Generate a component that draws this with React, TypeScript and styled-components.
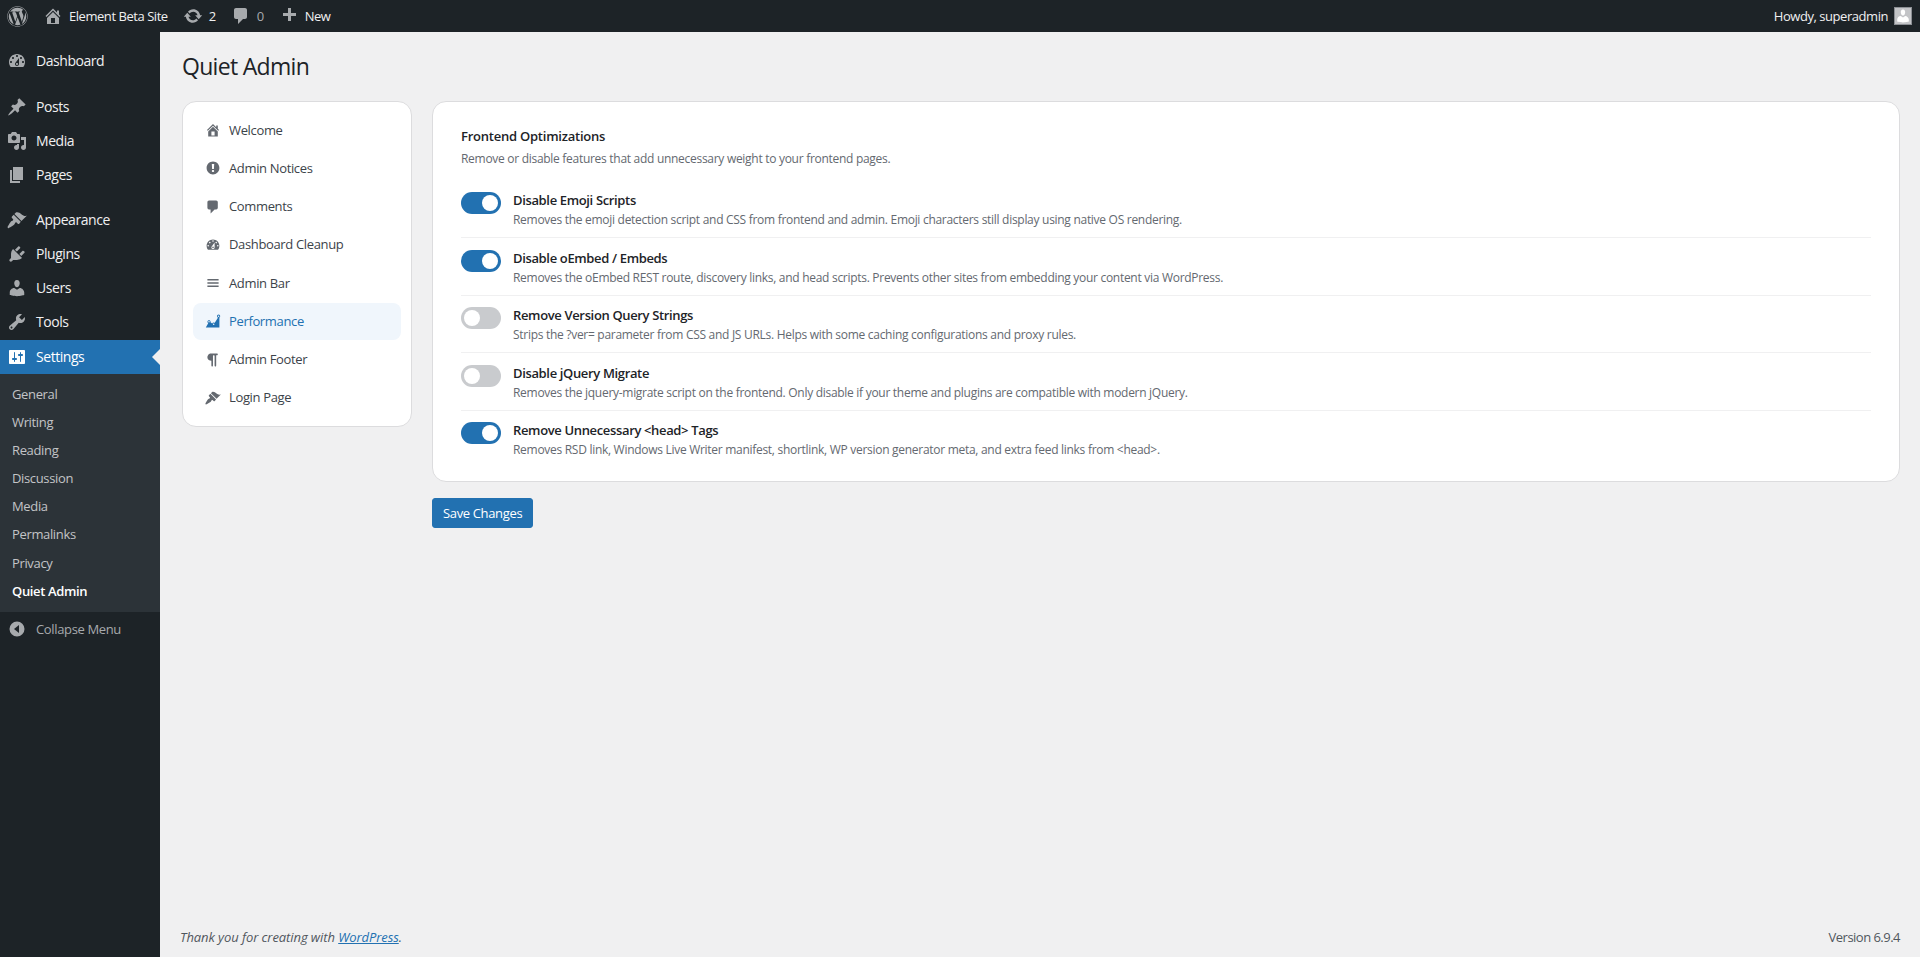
import styled, { createGlobalStyle } from "styled-components";
import { FaWordpress } from "react-icons/fa";

const GlobalStyle = createGlobalStyle`
  html, body {
    margin: 0;
    padding: 0;
    background: #f0f0f1;
  }
  body {
    font-family: "Open Sans", "Noto Sans", sans-serif;
    font-size: 13px;
    letter-spacing: -0.027em;
    color: #3c434a;
  }
`;

// dashicons drawn on a 20x20 grid
const paths: Record<string, string> = {
  home: "M16 8.5l1.53 1.53-1.06 1.06L10 4.62l-6.47 6.47-1.06-1.06L10 2.5l4 4v-2h2v4zm-6-2.46l6 5.99V18H4v-5.97zM12 17v-5H8v5h4z",
  update:
    "M10.2 3.28c3.53 0 6.43 2.61 6.92 6h2.08l-3.5 4-3.5-4h2.32c-.45-1.97-2.21-3.45-4.32-3.45-1.45 0-2.73.71-3.54 1.78L4.95 5.66C6.23 4.2 8.11 3.28 10.2 3.28zm-.4 13.44c-3.52 0-6.43-2.61-6.92-6H.8l3.5-4c1.17 1.33 2.33 2.67 3.5 4H5.48c.45 1.97 2.21 3.45 4.32 3.45 1.45 0 2.73-.71 3.54-1.78l1.71 1.95c-1.28 1.46-3.15 2.38-5.25 2.38z",
  comment: "M5 2h9c1.1 0 2 .9 2 2v7c0 1.1-.9 2-2 2h-2l-5 5v-5H5c-1.1 0-2-.9-2-2V4c0-1.1.9-2 2-2z",
  plus: "M17 7v3h-5v5H9v-5H4V7h5V2h3v5h5z",
  dashboard:
    "M3.76 16h12.48c1.1-1.37 1.76-3.11 1.76-5 0-4.42-3.58-8-8-8s-8 3.58-8 8c0 1.89.66 3.63 1.76 5zM10 4c.55 0 1 .45 1 1s-.45 1-1 1-1-.45-1-1 .45-1 1-1zM6 6c.55 0 1 .45 1 1s-.45 1-1 1-1-.45-1-1 .45-1 1-1zm8 0c.55 0 1 .45 1 1s-.45 1-1 1-1-.45-1-1 .45-1 1-1zm-5.37 5.55L12 7v6c0 1.1-.9 2-2 2s-2-.9-2-2c0-.57.24-1.08.63-1.45zM4 10c.55 0 1 .45 1 1s-.45 1-1 1-1-.45-1-1 .45-1 1-1zm12 0c.55 0 1 .45 1 1s-.45 1-1 1-1-.45-1-1 .45-1 1-1zm-5 3c0-.55-.45-1-1-1s-1 .45-1 1 .45 1 1 1 1-.45 1-1z",
  pin: "M10.44 3.02l1.82-1.82 6.36 6.35-1.83 1.82c-1.05-.68-2.48-.57-3.41.36l-.75.75c-.92.93-1.04 2.35-.35 3.41l-1.83 1.82-2.41-2.41-2.8 2.79c-.42.42-3.38 2.71-3.8 2.29s1.86-3.39 2.28-3.81l2.79-2.79L4.1 9.36l1.83-1.82c1.05.69 2.48.57 3.4-.36l.75-.75c.93-.92 1.05-2.35.36-3.41z",
  media:
    "M13 11V4c0-.55-.45-1-1-1h-1.67L9 1H5L3.67 3H2c-.55 0-1 .45-1 1v7c0 .55.45 1 1 1h10c.55 0 1-.45 1-1zM7 4.5c1.38 0 2.5 1.12 2.5 2.5S8.38 9.5 7 9.5 4.5 8.38 4.5 7 5.62 4.5 7 4.5zM14 6h5v10.5c0 1.38-1.12 2.5-2.5 2.5S14 17.88 14 16.5s1.12-2.5 2.5-2.5c.17 0 .34.02.5.05V9h-3V6zm-4 8.05V13h2v3.5c0 1.38-1.12 2.5-2.5 2.5S7 17.88 7 16.5 8.12 14 9.5 14c.17 0 .34.02.5.05z",
  page: "M6 15V2h10v13H6zm-1 1h8v2H3V5h2v11z",
  brush:
    "M14.48 11.06L7.41 3.99l1.5-1.5c.5-.56 2.3-.47 3.51.32 1.21.8 1.43 1.28 2.91 2.1 1.18.64 2.45 1.26 4.45.85zm-.71.71L6.7 4.7 4.93 6.47c-.39.39-.39 1.02 0 1.41l1.06 1.06c.39.39.39 1.03 0 1.42-.6.6-1.6.75-2.4 1.6-.7.75-2.9 4.7-2.9 4.7s-.3.8.1 1.2.9.3 1.2.1c0 0 4-2.2 4.75-2.9.85-.8 1-1.8 1.6-2.4.39-.39 1.03-.39 1.42 0l1.06 1.06c.39.39 1.02.39 1.41 0z",
  plugin:
    "M13.11 4.36L9.87 7.6 8 5.73l3.24-3.24c.35-.34 1.05-.2 1.56.32.52.51.66 1.21.31 1.55zm-8 1.77l.91-1.12 9.01 9.01-1.19.84c-.71.71-2.63 1.16-3.82 1.16H6.14L4.9 17.26c-.59.59-1.54.59-2.12 0-.59-.58-.59-1.53 0-2.12l1.24-1.24v-3.88c0-1.13.4-3.19 1.09-3.89zm7.26 3.97l3.24-3.24c.34-.35 1.04-.21 1.55.31.52.51.66 1.21.31 1.55l-3.24 3.25z",
  users:
    "M10 9.25c-2.27 0-2.73-3.44-2.73-3.44C7 4.02 7.82 2 9.97 2c2.16 0 2.98 2.02 2.71 3.81 0 0-.41 3.44-2.68 3.44zm0 2.57L12.72 10c2.39 0 4.52 2.33 4.52 4.53v2.49s-3.65 1.13-7.24 1.13c-3.65 0-7.24-1.13-7.24-1.13v-2.49c0-2.25 1.94-4.48 4.47-4.48z",
  tools:
    "M16.68 9.77c-1.34 1.34-3.3 1.67-4.95.99l-5.41 6.52c-.99.99-2.59.99-3.58 0s-.99-2.59 0-3.57l6.52-5.42c-.68-1.65-.35-3.61.99-4.95 1.28-1.28 3.12-1.62 4.72-1.06l-2.89 2.89 2.82 2.82 2.86-2.87c.53 1.58.18 3.39-1.08 4.65zM3.81 16.21c.4.39 1.04.39 1.43 0 .4-.4.4-1.04 0-1.43-.39-.4-1.03-.4-1.43 0-.39.39-.39 1.03 0 1.43z",
  settings:
    "M18 16V4c0-.55-.45-1-1-1H3c-.55 0-1 .45-1 1v12c0 .55.45 1 1 1h14c.55 0 1-.45 1-1zM8 11h1c.55 0 1 .45 1 1s-.45 1-1 1H8v1.5c0 .28-.22.5-.5.5s-.5-.22-.5-.5V13H6c-.55 0-1-.45-1-1s.45-1 1-1h1V5.5c0-.28.22-.5.5-.5s.5.22.5.5V11zm5-2h-1c-.55 0-1-.45-1-1s.45-1 1-1h1V5.5c0-.28.22-.5.5-.5s.5.22.5.5V7h1c.55 0 1 .45 1 1s-.45 1-1 1h-1v5.5c0 .28-.22.5-.5.5s-.5-.22-.5-.5V9z",
  collapse: "M10 2.5a7.5 7.5 0 1 0 0 15 7.5 7.5 0 0 0 0-15zM12 6v8l-5-4z",
  warning:
    "M10 2c4.42 0 8 3.58 8 8s-3.58 8-8 8-8-3.58-8-8 3.58-8 8-8zm1.13 9.38l.35-6.46H8.52l.35 6.46h2.26zm-.09 3.36c.24-.23.37-.55.37-.96 0-.42-.12-.74-.36-.97s-.59-.35-1.06-.35-.82.12-1.07.35-.37.55-.37.97c0 .41.13.73.38.96.26.23.61.34 1.06.34s.8-.11 1.05-.34z",
  menu: "M17 7V5H3v2h14zm0 4V9H3v2h14zm0 4v-2H3v2h14z",
  chart:
    "M18 18l.01-12.28c.59-.35.99-.99.99-1.72 0-1.1-.9-2-2-2s-2 .9-2 2c0 .8.47 1.48 1.14 1.8l-4.13 6.58c-.33-.24-.73-.38-1.16-.38-.84 0-1.55.51-1.85 1.24l-2.14-1.53c.09-.22.14-.46.14-.71 0-1.11-.89-2-2-2-1.1 0-2 .89-2 2 0 .73.4 1.36.98 1.71L1 18h17zM17 3c.55 0 1 .45 1 1s-.45 1-1 1-1-.45-1-1 .45-1 1-1zM5 10c.55 0 1 .45 1 1s-.45 1-1 1-1-.45-1-1 .45-1 1-1zm5.85 3c.55 0 1 .45 1 1s-.45 1-1 1-1-.45-1-1 .45-1 1-1z",
  paragraph:
    "M15 2H7.54c-.83 0-1.59.2-2.28.6-.7.41-1.25.96-1.65 1.65C3.2 4.94 3 5.7 3 6.52s.2 1.58.61 2.27c.4.69.95 1.24 1.65 1.64.69.41 1.45.61 2.28.61h.43V17c0 .27.1.51.29.71.2.19.44.29.71.29.28 0 .51-.1.71-.29.2-.2.3-.44.3-.71V5c0-.27.09-.51.29-.71.2-.19.44-.29.71-.29s.51.1.71.29c.19.2.29.44.29.71v12c0 .27.1.51.3.71.2.19.43.29.71.29.27 0 .51-.1.71-.29.19-.2.29-.44.29-.71V4H15c.27 0 .5-.1.7-.3.2-.19.3-.43.3-.7s-.1-.51-.3-.71C15.5 2.1 15.27 2 15 2z",
};

const IconSvg = styled.svg<{ $size: number; $color: string }>`
  width: ${(p) => p.$size}px;
  height: ${(p) => p.$size}px;
  flex: none;
  fill: ${(p) => p.$color};
`;

function Dashicon({ name, size = 20, color = "#a7aaad" }: { name: string; size?: number; color?: string }) {
  return (
    <IconSvg viewBox="0 0 20 20" $size={size} $color={color}>
      <path fillRule="evenodd" d={paths[name]} />
    </IconSvg>
  );
}

const Page = styled.div`
  display: flex;
  flex-direction: column;
  height: 957px;
  overflow: hidden;
`;

const TopBar = styled.header`
  display: flex;
  align-items: center;
  justify-content: space-between;
  flex: none;
  height: 32px;
  background: #1d2327;
  color: #f0f0f1;
  letter-spacing: -0.035em;
`;
const BarGroup = styled.div`
  display: flex;
  align-items: center;
  gap: 1px;
  height: 100%;
`;
const BarItem = styled.div<{ $muted?: boolean }>`
  display: flex;
  align-items: center;
  gap: 6px;
  height: 100%;
  padding: 0 7px;
  color: ${(p) => (p.$muted ? "#a7aaad" : "#f0f0f1")};
`;
const WpLogo = styled(FaWordpress)`
  display: block;
  width: 21px;
  height: 21px;
  color: #a7aaad;
`;
const Howdy = styled.div`
  display: flex;
  align-items: center;
  gap: 6px;
  padding-right: 8px;
`;
const Avatar = styled.div`
  display: flex;
  align-items: flex-end;
  justify-content: center;
  width: 16px;
  height: 16px;
  background: #c3c4c7;
  border: 1px solid #8c8f94;
  overflow: hidden;
`;

const Body = styled.div`
  display: flex;
  flex: 1;
  min-height: 0;
`;

const Sidebar = styled.aside`
  flex: none;
  width: 160px;
  padding-top: 12px;
  background: #1d2327;
`;
const MenuItem = styled.div<{ $current?: boolean }>`
  position: relative;
  display: flex;
  align-items: center;
  gap: 9px;
  height: 34px;
  padding-left: 7px;
  font-size: 14px;
  letter-spacing: -0.032em;
  line-height: 32px;
  color: ${(p) => (p.$current ? "#fff" : "#f0f0f1")};
  background: ${(p) => (p.$current ? "#2271b1" : "transparent")};
`;
const CurrentArrow = styled.span`
  position: absolute;
  right: 0;
  top: 9px;
  border: 8px solid transparent;
  border-right-color: #f0f0f1;
  border-left-width: 0;
`;
const MenuGap = styled.div<{ $h: number }>`
  height: ${(p) => p.$h}px;
`;
const SubMenu = styled.div`
  padding: 7px 0 6.2px;
  background: #2c3338;
`;
const SubItem = styled.div<{ $current?: boolean }>`
  height: 28.1px;
  padding-left: 12px;
  font-size: 13px;
  line-height: 27px;
  font-weight: ${(p) => (p.$current ? 600 : 400)};
  color: ${(p) => (p.$current ? "#fff" : "#c3c4c7")};
`;
const CollapseRow = styled.div`
  display: flex;
  align-items: center;
  gap: 9px;
  height: 34px;
  padding-left: 7px;
  line-height: 32px;
  color: #a7aaad;
`;

const Content = styled.main`
  display: flex;
  flex-direction: column;
  flex: 1;
  min-width: 0;
  padding: 0 20px 0 22px;
`;
const Title = styled.h1`
  margin: 0;
  padding: 20px 0;
  font-size: 23px;
  font-weight: 400;
  line-height: 29px;
  letter-spacing: -0.03em;
  color: #1d2327;
`;
const Columns = styled.div`
  display: flex;
  align-items: flex-start;
  gap: 20px;
`;
const Card = styled.div`
  background: #fff;
  border: 1px solid #dcdcde;
  border-radius: 14px;
`;
const NavCard = styled(Card)`
  display: flex;
  flex-direction: column;
  gap: 2px;
  flex: none;
  width: 230px;
  box-sizing: border-box;
  padding: 10px;
`;
const NavItem = styled.div<{ $active?: boolean }>`
  display: flex;
  align-items: center;
  gap: 8px;
  height: 36.25px;
  padding: 0 12px;
  border-radius: 8px;
  line-height: 35px;
  font-weight: ${(p) => (p.$active ? 500 : 400)};
  color: ${(p) => (p.$active ? "#2271b1" : "#3c434a")};
  background: ${(p) => (p.$active ? "#f0f6fc" : "transparent")};
`;
const Panel = styled.div`
  flex: 1;
  min-width: 0;
`;
const PanelCard = styled(Card)`
  padding: 24px 28px;
  box-sizing: border-box;
  height: 381px;
`;
const SectionTitle = styled.h2`
  margin: 0 0 4px;
  font-size: 13px;
  font-weight: 600;
  line-height: 20px;
  letter-spacing: -0.018em;
  color: #1d2327;
`;
const SectionDesc = styled.p`
  margin: 0 0 12.4px;
  font-size: 12px;
  line-height: 18px;
  letter-spacing: -0.024em;
  color: #646970;
`;
const Row = styled.div<{ $last?: boolean }>`
  display: flex;
  gap: 12px;
  height: 57.6px;
  box-sizing: border-box;
  padding-top: 11.6px;
  border-bottom: ${(p) => (p.$last ? "none" : "1px solid #f0f0f1")};
`;
const Track = styled.div<{ $on: boolean }>`
  position: relative;
  flex: none;
  width: 40px;
  height: 22px;
  border-radius: 11px;
  background: ${(p) => (p.$on ? "#2271b1" : "#c9cbce")};
`;
const Knob = styled.span<{ $on: boolean }>`
  position: absolute;
  top: 3px;
  left: ${(p) => (p.$on ? "21px" : "3px")};
  width: 16px;
  height: 16px;
  border-radius: 50%;
  background: #fff;
`;
const RowTitle = styled.div`
  font-size: 13px;
  font-weight: 600;
  line-height: 17px;
  color: #1d2327;
`;
const RowDesc = styled.div`
  margin-top: 2px;
  font-size: 12px;
  line-height: 18px;
  letter-spacing: -0.024em;
  color: #646970;
`;
const SaveButton = styled.button`
  display: block;
  margin-top: 16px;
  height: 30px;
  padding: 0 10px;
  border: 1px solid #2271b1;
  border-radius: 3px;
  background: #2271b1;
  color: #fff;
  font: inherit;
  letter-spacing: inherit;
`;
const Footer = styled.footer`
  display: flex;
  justify-content: space-between;
  margin: auto 0 0 -2px;
  padding-bottom: 11px;
  line-height: 18px;
  color: #50575e;
`;
const Thanks = styled.span`
  font-style: italic;
  letter-spacing: -0.006em;
`;
const FooterLink = styled.a`
  color: #2271b1;
  text-decoration: underline;
`;
const Version = styled.span`
  letter-spacing: -0.04em;
`;

const navItems = [
  { icon: "home", label: "Welcome" },
  { icon: "warning", label: "Admin Notices" },
  { icon: "comment", label: "Comments" },
  { icon: "dashboard", label: "Dashboard Cleanup" },
  { icon: "menu", label: "Admin Bar" },
  { icon: "chart", label: "Performance", active: true },
  { icon: "paragraph", label: "Admin Footer" },
  { icon: "brush", label: "Login Page" },
];

const options = [
  {
    on: true,
    title: "Disable Emoji Scripts",
    desc: "Removes the emoji detection script and CSS from frontend and admin. Emoji characters still display using native OS rendering.",
  },
  {
    on: true,
    title: "Disable oEmbed / Embeds",
    desc: "Removes the oEmbed REST route, discovery links, and head scripts. Prevents other sites from embedding your content via WordPress.",
  },
  {
    on: false,
    title: "Remove Version Query Strings",
    desc: "Strips the ?ver= parameter from CSS and JS URLs. Helps with some caching configurations and proxy rules.",
  },
  {
    on: false,
    title: "Disable jQuery Migrate",
    desc: "Removes the jquery-migrate script on the frontend. Only disable if your theme and plugins are compatible with modern jQuery.",
  },
  {
    on: true,
    title: "Remove Unnecessary <head> Tags",
    desc: "Removes RSD link, Windows Live Writer manifest, shortlink, WP version generator meta, and extra feed links from <head>.",
  },
];

const subItems = ["General", "Writing", "Reading", "Discussion", "Media", "Permalinks", "Privacy"];

export default function App() {
  return (
    <Page>
      <GlobalStyle />
      <TopBar>
        <BarGroup>
          <BarItem>
            <WpLogo />
          </BarItem>
          <BarItem>
            <Dashicon name="home" />
            Element Beta Site
          </BarItem>
          <BarItem>
            <Dashicon name="update" />2
          </BarItem>
          <BarItem $muted>
            <Dashicon name="comment" />0
          </BarItem>
          <BarItem>
            <Dashicon name="plus" />
            New
          </BarItem>
        </BarGroup>
        <Howdy>
          Howdy, superadmin
          <Avatar>
            <Dashicon name="users" size={16} color="#fff" />
          </Avatar>
        </Howdy>
      </TopBar>
      <Body>
        <Sidebar>
          <MenuItem>
            <Dashicon name="dashboard" />
            Dashboard
          </MenuItem>
          <MenuGap $h={12} />
          <MenuItem>
            <Dashicon name="pin" />
            Posts
          </MenuItem>
          <MenuItem>
            <Dashicon name="media" />
            Media
          </MenuItem>
          <MenuItem>
            <Dashicon name="page" />
            Pages
          </MenuItem>
          <MenuGap $h={11} />
          <MenuItem>
            <Dashicon name="brush" />
            Appearance
          </MenuItem>
          <MenuItem>
            <Dashicon name="plugin" />
            Plugins
          </MenuItem>
          <MenuItem>
            <Dashicon name="users" />
            Users
          </MenuItem>
          <MenuItem>
            <Dashicon name="tools" />
            Tools
          </MenuItem>
          <MenuGap $h={1} />
          <MenuItem $current>
            <Dashicon name="settings" color="#fff" />
            Settings
            <CurrentArrow />
          </MenuItem>
          <SubMenu>
            {subItems.map((s) => (
              <SubItem key={s}>{s}</SubItem>
            ))}
            <SubItem $current>Quiet Admin</SubItem>
          </SubMenu>
          <CollapseRow>
            <Dashicon name="collapse" />
            Collapse Menu
          </CollapseRow>
        </Sidebar>
        <Content>
          <Title>Quiet Admin</Title>
          <Columns>
            <NavCard>
              {navItems.map((n) => (
                <NavItem key={n.label} $active={n.active}>
                  <Dashicon name={n.icon} size={16} color={n.active ? "#2271b1" : "#646970"} />
                  {n.label}
                </NavItem>
              ))}
            </NavCard>
            <Panel>
              <PanelCard>
                <SectionTitle>Frontend Optimizations</SectionTitle>
                <SectionDesc>Remove or disable features that add unnecessary weight to your frontend pages.</SectionDesc>
                {options.map((o, i) => (
                  <Row key={o.title} $last={i === options.length - 1}>
                    <Track $on={o.on}>
                      <Knob $on={o.on} />
                    </Track>
                    <div>
                      <RowTitle>{o.title}</RowTitle>
                      <RowDesc>{o.desc}</RowDesc>
                    </div>
                  </Row>
                ))}
              </PanelCard>
              <SaveButton>Save Changes</SaveButton>
            </Panel>
          </Columns>
          <Footer>
            <Thanks>
              Thank you for creating with <FooterLink>WordPress</FooterLink>.
            </Thanks>
            <Version>Version 6.9.4</Version>
          </Footer>
        </Content>
      </Body>
    </Page>
  );
}
